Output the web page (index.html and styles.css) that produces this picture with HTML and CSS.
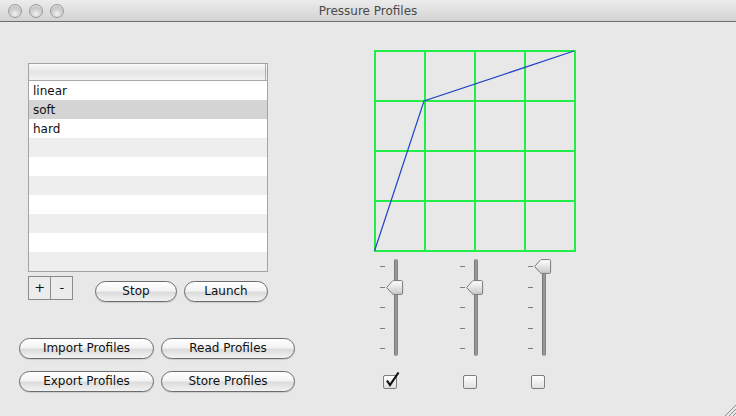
FILE: index.html
```html
<!DOCTYPE html>
<html>
<head>
<meta charset="utf-8">
<title>Pressure Profiles</title>
<link rel="stylesheet" href="styles.css">
</head>
<body>
<div class="window">
  <div class="titlebar">
    <div class="lights">
      <span class="light"></span><span class="light"></span><span class="light"></span>
    </div>
    <div class="title">Pressure Profiles</div>
    <div></div>
  </div>
  <div class="content">
    <div class="left">
      <div class="list">
        <div class="list-header"><div class="hcell"></div></div>
        <div class="row">linear</div>
        <div class="row selected">soft</div>
        <div class="row">hard</div>
        <div class="row alt"></div>
        <div class="row"></div>
        <div class="row alt"></div>
        <div class="row"></div>
        <div class="row alt"></div>
        <div class="row"></div>
        <div class="row alt"></div>
      </div>
      <div class="list-controls">
        <div class="plusminus">
          <div class="pm">+</div>
          <div class="pm pm-right">-</div>
        </div>
        <button class="aqua stop">Stop</button>
        <button class="aqua launch">Launch</button>
      </div>
      <div class="profile-buttons">
        <button class="aqua">Import Profiles</button>
        <button class="aqua">Read Profiles</button>
        <button class="aqua">Export Profiles</button>
        <button class="aqua">Store Profiles</button>
      </div>
    </div>
    <div class="right">
      <svg class="graph" width="202" height="202" viewBox="0 0 202 202">
        <g stroke="#22ee48" stroke-width="2">
          <line x1="1" y1="0" x2="1" y2="202"/>
          <line x1="51" y1="0" x2="51" y2="202"/>
          <line x1="101" y1="0" x2="101" y2="202"/>
          <line x1="151" y1="0" x2="151" y2="202"/>
          <line x1="201" y1="0" x2="201" y2="202"/>
          <line x1="0" y1="1" x2="202" y2="1"/>
          <line x1="0" y1="51" x2="202" y2="51"/>
          <line x1="0" y1="101" x2="202" y2="101"/>
          <line x1="0" y1="151" x2="202" y2="151"/>
          <line x1="0" y1="201" x2="202" y2="201"/>
        </g>
        <polyline points="0.5,201 50,51 200,1" fill="none" stroke="#2345c8" stroke-width="1.2"/>
      </svg>
      <div class="sliders">
        <div class="slider">
          <div class="ticks"><i></i><i></i><i></i><i></i><i></i></div>
          <div class="track"></div>
          <svg class="thumb thumb-mid" width="18" height="16" viewBox="0 0 18 16">
            <defs><linearGradient id="tg1" x1="0" y1="0" x2="0" y2="1"><stop offset="0" stop-color="#ffffff"/><stop offset="1" stop-color="#c8c8c8"/></linearGradient></defs>
            <path d="M0.6 7.5 L6 1.5 Q6.6 0.6 7.6 0.6 H15.4 Q16.6 0.6 16.6 1.8 V13.2 Q16.6 14.4 15.4 14.4 H7.6 Q6.6 14.4 6 13.5 Z" fill="url(#tg1)" stroke="#7a7a7a" stroke-width="1"/>
          </svg>
        </div>
        <div class="slider">
          <div class="ticks"><i></i><i></i><i></i><i></i><i></i></div>
          <div class="track"></div>
          <svg class="thumb thumb-mid" width="18" height="16" viewBox="0 0 18 16">
            <path d="M0.6 7.5 L6 1.5 Q6.6 0.6 7.6 0.6 H15.4 Q16.6 0.6 16.6 1.8 V13.2 Q16.6 14.4 15.4 14.4 H7.6 Q6.6 14.4 6 13.5 Z" fill="url(#tg1)" stroke="#7a7a7a" stroke-width="1"/>
          </svg>
        </div>
        <div class="slider">
          <div class="ticks"><i></i><i></i><i></i><i></i><i></i></div>
          <div class="track"></div>
          <svg class="thumb thumb-top" width="18" height="16" viewBox="0 0 18 16">
            <path d="M0.6 7.5 L6 1.5 Q6.6 0.6 7.6 0.6 H15.4 Q16.6 0.6 16.6 1.8 V13.2 Q16.6 14.4 15.4 14.4 H7.6 Q6.6 14.4 6 13.5 Z" fill="url(#tg1)" stroke="#7a7a7a" stroke-width="1"/>
          </svg>
        </div>
      </div>
      <div class="checks">
        <div class="checkbox checked">
          <svg class="checkmark" width="16" height="18" viewBox="0 0 16 18">
            <path d="M3 9.5 L6 14 L14.5 1.5" fill="none" stroke="#111" stroke-width="2.2" stroke-linejoin="miter"/>
          </svg>
        </div>
        <div class="checkbox"></div>
        <div class="checkbox"></div>
      </div>
    </div>
  </div>
  <svg class="grip" width="12" height="12" viewBox="0 0 12 12">
    <g stroke="#8a8a8a" stroke-width="1">
      <line x1="1" y1="12" x2="12" y2="1"/>
      <line x1="5" y1="12" x2="12" y2="5"/>
      <line x1="9" y1="12" x2="12" y2="9"/>
    </g>
  </svg>
</div>
</body>
</html>
```
FILE: styles.css
```css
* { box-sizing: border-box; }
html, body { margin: 0; padding: 0; }
body {
  width: 736px;
  height: 416px;
  overflow: hidden;
  background: #e8e8e8;
  font-family: "DejaVu Sans", "Liberation Sans", sans-serif;
  font-size: 12px;
  color: #111;
}
.window {
  position: relative;
  width: 736px;
  height: 416px;
  background: #e8e8e8;
}
.titlebar {
  height: 22px;
  display: grid;
  grid-template-columns: 1fr auto 1fr;
  align-items: center;
  background: linear-gradient(#ececec, #d3d3d3);
  border-bottom: 1px solid #6f6f6f;
}
.lights {
  display: flex;
  gap: 7px;
  padding-left: 8px;
  padding-top: 1px;
}
.light {
  width: 14px;
  height: 14px;
  border-radius: 50%;
  border: 1px solid #9a9a9a;
  background: radial-gradient(circle at 50% 75%, #f2f2f2 0%, #cfcfcf 45%, #b4b4b4 100%);
  box-shadow: inset 0 1px 1px rgba(255,255,255,0.6);
}
.title {
  color: #4a4a4a;
  font-size: 12px;
  padding-top: 1px;
}
.content {
  display: flex;
  padding-left: 19px;
  gap: 79px;
}
.left {
  width: 276px;
}
.list {
  margin-top: 41px;
  margin-left: 9px;
  width: 240px;
  height: 209px;
  border: 1px solid #a3a3a3;
  background: #fff;
}
.list-header {
  height: 17px;
  border-bottom: 1px solid #a9a9a9;
  background: linear-gradient(#fafafa, #e4e4e4 50%, #f2f2f2);
  display: flex;
}
.hcell {
  width: 237px;
  border-right: 1px solid #b0b0b0;
}
.row {
  height: 19px;
  line-height: 19px;
  padding-left: 4px;
  padding-top: 1px;
  background: #fff;
}
.row.alt { background: #eeeeee; }
.row.selected { background: #d4d4d4; }
.list-controls {
  display: flex;
  align-items: flex-start;
  margin-top: 4px;
  margin-left: 9px;
}
.plusminus {
  display: flex;
  width: 45px;
  height: 24px;
  border: 1px solid #8c8c8c;
  background: #ececec;
}
.pm {
  width: 22px;
  height: 22px;
  line-height: 21px;
  text-align: center;
  font-size: 13px;
}
.pm-right {
  border-left: 1px solid #8c8c8c;
}
.aqua {
  height: 21px;
  padding: 0;
  border: 1px solid #6c6c6c;
  border-radius: 11px;
  background: linear-gradient(#ffffff 0%, #f4f4f4 45%, #dcdcdc 55%, #f2f2f2 100%);
  font-family: "DejaVu Sans", "Liberation Sans", sans-serif;
  font-size: 12px;
  color: #111;
  line-height: 19px;
  text-align: center;
  box-shadow: 0 1px 1px rgba(0,0,0,0.12);
}
.stop {
  width: 82px;
  margin-top: 5px;
  margin-left: 22px;
}
.launch {
  width: 84px;
  margin-top: 5px;
  margin-left: 7px;
}
.profile-buttons {
  display: grid;
  grid-template-columns: 135px 134px;
  column-gap: 7px;
  row-gap: 12px;
  margin-top: 36px;
}
.right {
  width: 220px;
}
.graph {
  display: block;
  margin-top: 28px;
}
.sliders {
  display: grid;
  grid-template-columns: 80px 68px 28px;
  margin-top: 7px;
  padding-left: 4px;
}
.slider {
  position: relative;
  display: flex;
  width: 28px;
  height: 97px;
}
.ticks {
  display: flex;
  flex-direction: column;
  justify-content: space-between;
  width: 5px;
  margin-left: 2px;
  padding: 7px 0 7px;
}
.ticks i {
  display: block;
  width: 5px;
  height: 1px;
  background: #7c7c7c;
}
.track {
  width: 4px;
  height: 97px;
  margin-left: 9px;
  border-radius: 2px;
  background: linear-gradient(to right, #6a6a6a, #a4a4a4 50%, #777777);
}
.thumb {
  position: absolute;
  left: 8px;
}
.thumb-mid { top: 21px; }
.thumb-top { top: 0px; }
.checks {
  display: grid;
  grid-template-columns: 80px 68px 28px;
  margin-top: 19px;
  padding-left: 4px;
}
.checkbox {
  position: relative;
  width: 14px;
  height: 14px;
  margin-left: 5px;
  border: 1px solid #7e7e7e;
  border-radius: 2px;
  background: linear-gradient(#ffffff, #e0e0e0);
}
.checkmark {
  position: absolute;
  left: 0px;
  top: -5px;
}
.grip {
  position: absolute;
  right: 0;
  bottom: 0;
}
```
